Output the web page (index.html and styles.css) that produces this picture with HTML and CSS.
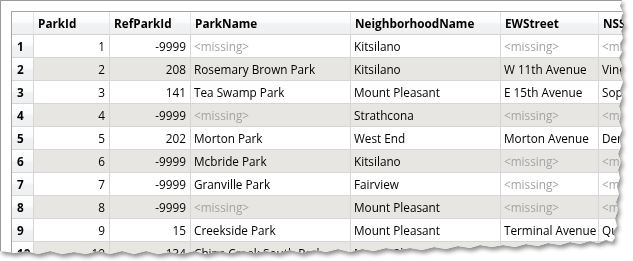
FILE: index.html
```html
<!DOCTYPE html>
<html>
<head>
<meta charset="utf-8">
<link rel="stylesheet" href="styles.css">
</head>
<body>
<div class="sheet">
  <div class="page">
    <table class="grid">
      <colgroup>
        <col class="c-rh"><col class="c-id"><col class="c-ref"><col class="c-name"><col class="c-nb"><col class="c-ew"><col class="c-ns">
      </colgroup>
      <thead>
        <tr><th></th><th>ParkId</th><th>RefParkId</th><th>ParkName</th><th>NeighborhoodName</th><th>EWStreet</th><th>NSStreet</th></tr>
      </thead>
      <tbody>
        <tr><th>1</th><td class="num">1</td><td class="num">-9999</td><td class="miss">&lt;missing&gt;</td><td>Kitsilano</td><td class="miss">&lt;missing&gt;</td><td class="miss">&lt;missing&gt;</td></tr>
        <tr><th>2</th><td class="num">2</td><td class="num">208</td><td>Rosemary Brown Park</td><td>Kitsilano</td><td>W 11th Avenue</td><td>Vine Street</td></tr>
        <tr><th>3</th><td class="num">3</td><td class="num">141</td><td>Tea Swamp Park</td><td>Mount Pleasant</td><td>E 15th Avenue</td><td>Sophia Street</td></tr>
        <tr><th>4</th><td class="num">4</td><td class="num">-9999</td><td class="miss">&lt;missing&gt;</td><td>Strathcona</td><td class="miss">&lt;missing&gt;</td><td class="miss">&lt;missing&gt;</td></tr>
        <tr><th>5</th><td class="num">5</td><td class="num">202</td><td>Morton Park</td><td>West End</td><td>Morton Avenue</td><td>Denman Street</td></tr>
        <tr><th>6</th><td class="num">6</td><td class="num">-9999</td><td>Mcbride Park</td><td>Kitsilano</td><td class="miss">&lt;missing&gt;</td><td class="miss">&lt;missing&gt;</td></tr>
        <tr><th>7</th><td class="num">7</td><td class="num">-9999</td><td>Granville Park</td><td>Fairview</td><td class="miss">&lt;missing&gt;</td><td class="miss">&lt;missing&gt;</td></tr>
        <tr><th>8</th><td class="num">8</td><td class="num">-9999</td><td class="miss">&lt;missing&gt;</td><td>Mount Pleasant</td><td class="miss">&lt;missing&gt;</td><td class="miss">&lt;missing&gt;</td></tr>
        <tr><th>9</th><td class="num">9</td><td class="num">15</td><td>Creekside Park</td><td>Mount Pleasant</td><td>Terminal Avenue</td><td>Quebec Street</td></tr>
        <tr><th>10</th><td class="num">10</td><td class="num">134</td><td>China Creek South Park</td><td>Mount Pleasant</td><td>E 10th Avenue</td><td>Clark Drive</td></tr>
      </tbody>
    </table>
  </div>
</div>
</body>
</html>
```
FILE: styles.css
```css
html, body {
  margin: 0;
  padding: 0;
  background: #ffffff;
}
body {
  width: 633px;
  height: 261px;
  overflow: hidden;
}
.sheet {
  width: 633px;
  height: 261px;
  filter: drop-shadow(2px 3px 2px rgba(0, 0, 0, 0.45));
}
.page {
  box-sizing: border-box;
  width: 633px;
  height: 261px;
  background: #ffffff;
  border-top: 1px solid #9b9b9b;
  border-left: 1px solid #9b9b9b;
  padding: 10px 0 0 10px;
  overflow: hidden;
  clip-path: polygon(
    0px 0px, 622px 0px, 620px 6px, 623px 12px, 621px 18px, 624px 25px, 621px 31px, 623px 38px, 620px 44px,
    622px 52px, 619px 58px, 622px 66px, 620px 74px, 623px 82px, 620px 90px, 622px 98px, 619px 106px,
    621px 114px, 619px 122px, 622px 130px, 619px 138px, 621px 146px, 618px 154px, 621px 162px, 618px 170px,
    620px 178px, 617px 186px, 619px 194px, 616px 202px, 618px 210px, 615px 218px, 617px 226px, 613px 232px,
    615px 238px, 612px 242px,
    606px 240px, 598px 243px, 590px 241px, 580px 244px, 570px 242px, 560px 245px, 548px 243px, 538px 246px,
    526px 244px, 515px 247px, 503px 245px, 492px 247px, 480px 245px, 470px 248px, 458px 246px, 446px 249px,
    434px 247px, 422px 250px, 410px 248px, 398px 250px, 386px 248px, 374px 251px, 362px 249px, 350px 252px,
    338px 249px, 326px 252px, 314px 250px, 302px 253px, 290px 250px, 278px 253px, 266px 251px, 254px 253px,
    242px 251px, 230px 253px, 218px 251px, 206px 254px, 194px 251px, 182px 254px, 170px 252px, 158px 254px,
    146px 251px, 134px 254px, 122px 251px, 110px 254px, 98px 251px, 86px 254px, 74px 252px, 62px 254px,
    50px 251px, 38px 254px, 26px 251px, 14px 253px, 0px 251px
  );
}
.grid {
  table-layout: fixed;
  width: 690px;
  border-collapse: separate;
  border-spacing: 0;
  border-top: 1px solid #a3a3a3;
  border-left: 1px solid #a3a3a3;
  font-family: "Open Sans", "Noto Sans", sans-serif;
  font-size: 11.75px;
  color: #000000;
}
.c-rh { width: 22px; }
.c-id { width: 76px; }
.c-ref { width: 81px; }
.c-name { width: 160px; }
.c-nb { width: 150px; }
.c-ew { width: 98px; }
.c-ns { width: 102px; }
.grid th,
.grid td {
  box-sizing: border-box;
  height: 23px;
  padding: 0 3px;
  border-right: 1px solid #d6d6d6;
  border-bottom: 1px solid #d6d6d6;
  white-space: nowrap;
  overflow: hidden;
  vertical-align: middle;
  text-align: left;
  line-height: 16px;
}
.grid thead th {
  font-weight: bold;
  padding-left: 4px;
  background: linear-gradient(to bottom, #ffffff 0%, #fcfcfc 45%, #f1f2f4 55%, #eff0f2 100%);
  border-right-color: #e2e3e6;
  border-bottom-color: #d2d2d2;
}
.grid tbody th {
  font-weight: bold;
  padding-left: 5px;
  background: linear-gradient(to bottom, #ffffff 0%, #fafbfc 45%, #f1f2f4 55%, #eef0f2 100%);
}
.grid tbody tr:nth-child(even) td {
  background: #e7e6e2;
}
.grid td.num {
  text-align: right;
  padding-right: 4px;
}
.grid td.miss {
  color: #a3a3a3;
}
```
